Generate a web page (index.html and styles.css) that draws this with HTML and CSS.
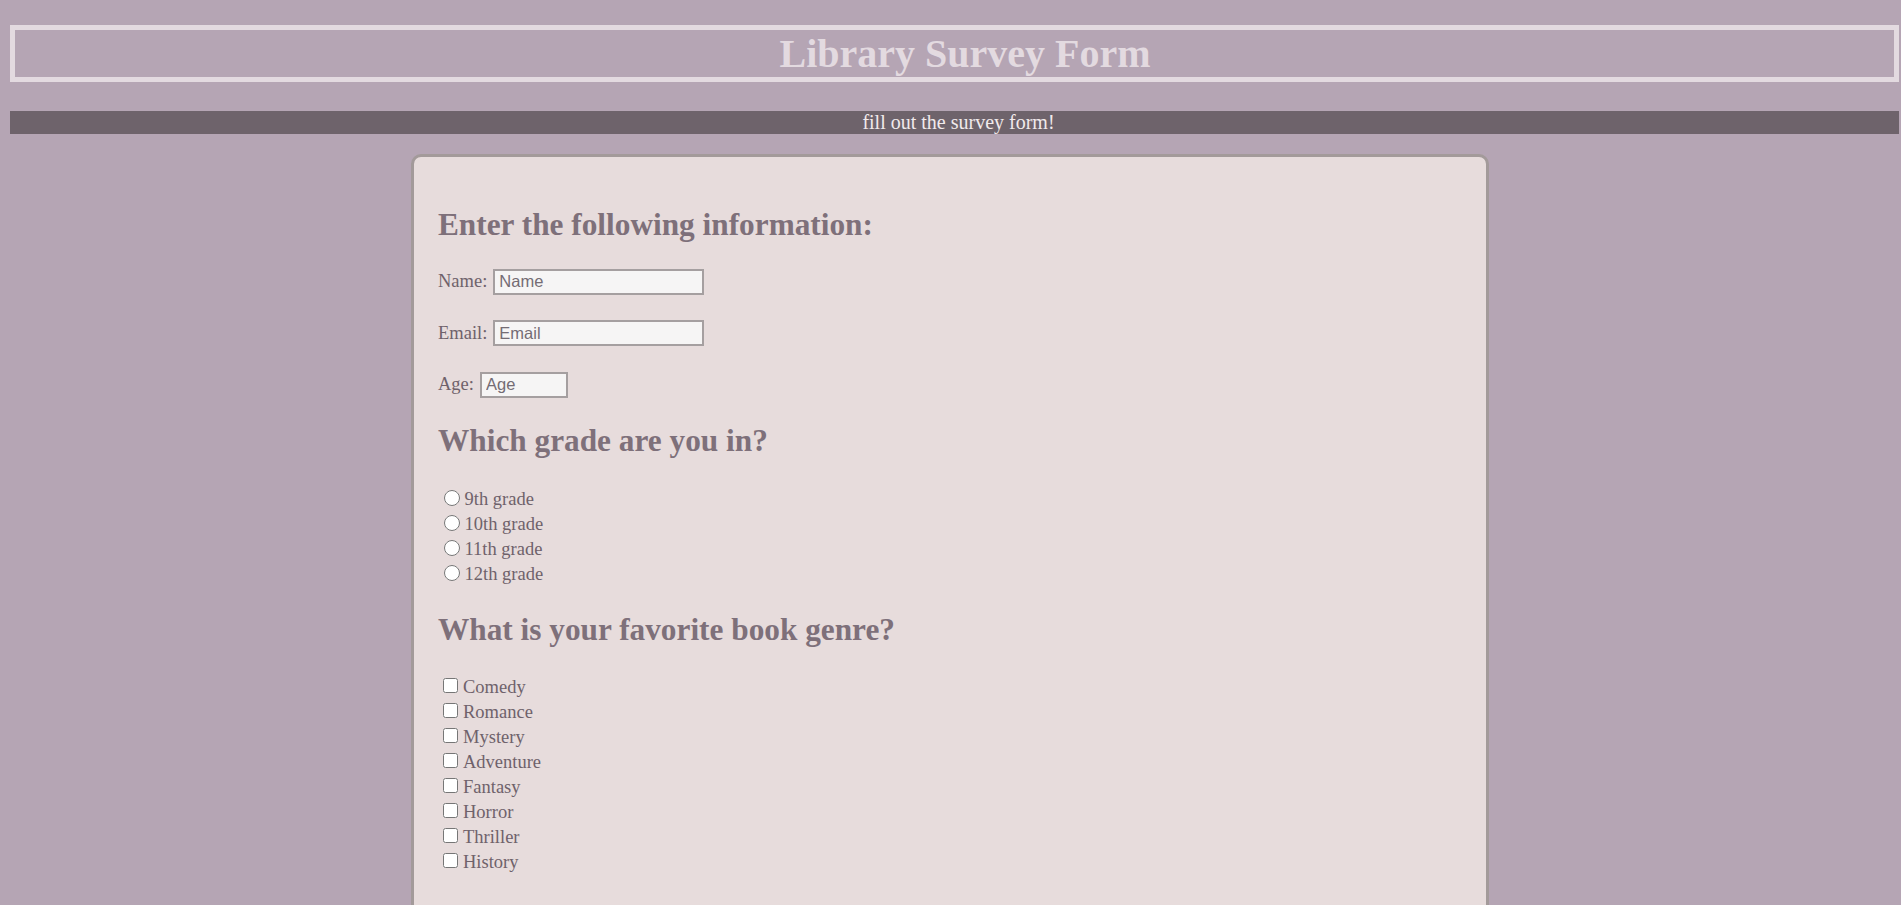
FILE: index.html
```html
<!DOCTYPE html>
<html lang="en">
<head>
<meta charset="utf-8">
<title>Library Survey Form</title>
<link rel="stylesheet" href="styles.css">
</head>
<body>
  <header class="title-box">
    <h1 class="title">Library Survey Form</h1>
  </header>
  <p class="description">fill out the survey form!</p>

  <form class="card">
    <h2 class="section-title first">Enter the following information:</h2>
    <div class="field">
      <label class="field-label" for="name">Name:</label>
      <input class="text-input wide" id="name" type="text" placeholder="Name">
    </div>
    <div class="field">
      <label class="field-label" for="email">Email:</label>
      <input class="text-input wide" id="email" type="email" placeholder="Email">
    </div>
    <div class="field">
      <label class="field-label" for="age">Age:</label>
      <input class="text-input narrow" id="age" type="number" placeholder="Age">
    </div>

    <h2 class="section-title">Which grade are you in?</h2>
    <div class="option-list">
      <label class="option"><input class="radio" type="radio" name="grade">9th grade</label>
      <label class="option"><input class="radio" type="radio" name="grade">10th grade</label>
      <label class="option"><input class="radio" type="radio" name="grade">11th grade</label>
      <label class="option"><input class="radio" type="radio" name="grade">12th grade</label>
    </div>

    <h2 class="section-title genre">What is your favorite book genre?</h2>
    <div class="option-list">
      <label class="option"><input class="check" type="checkbox">Comedy</label>
      <label class="option"><input class="check" type="checkbox">Romance</label>
      <label class="option"><input class="check" type="checkbox">Mystery</label>
      <label class="option"><input class="check" type="checkbox">Adventure</label>
      <label class="option"><input class="check" type="checkbox">Fantasy</label>
      <label class="option"><input class="check" type="checkbox">Horror</label>
      <label class="option"><input class="check" type="checkbox">Thriller</label>
      <label class="option"><input class="check" type="checkbox">History</label>
    </div>
  </form>
</body>
</html>
```
FILE: styles.css
```css
body {
  margin: 0 2px 0 10px;
  padding: 25px 0 0;
  background: #b5a5b4;
  font-family: "Liberation Serif", "Times New Roman", serif;
  color: #6f626b;
}

.title-box {
  padding: 0 0 0 21px;
  border: 5px solid #e3dae0;
}

.title {
  margin: 0;
  text-align: center;
  font-size: 40px;
  font-weight: bold;
  line-height: 47px;
  color: #e3dae0;
}

.description {
  margin: 29px 0 0;
  padding: 0 0 0 8px;
  background: #6e636b;
  color: #f1eaeb;
  font-size: 20px;
  line-height: 23px;
  text-align: center;
}

.card {
  box-sizing: border-box;
  width: 1078px;
  margin: 20px 0 0 401px;
  padding: 23px 24px 120px;
  background: #e7dcdc;
  border: 3px solid #a39a9a;
  border-radius: 10px;
}

.section-title {
  margin: 25px 0 28px;
  font-size: 31.3px;
  font-weight: bold;
  line-height: 35.6px;
  color: #7e707a;
}

.section-title.first {
  margin-top: 27px;
  margin-bottom: 26px;
}

.section-title.genre {
  margin-bottom: 27px;
}

.field {
  display: flex;
  align-items: baseline;
  gap: 6px;
  margin-bottom: 25.5px;
  font-size: 18.5px;
}

.field:last-of-type {
  margin-bottom: 0;
}

.field-label {
  color: #6f626b;
}

.text-input {
  box-sizing: border-box;
  height: 26px;
  margin: 0;
  padding: 0 4px;
  border: 2px solid #a59fa0;
  background: #f6f5f5;
  font-family: "Liberation Sans", Arial, sans-serif;
  font-size: 16.5px;
  color: #6f626b;
  outline: none;
}

.text-input::placeholder {
  color: #746c74;
  opacity: 1;
}

.text-input.wide {
  width: 211px;
}

.text-input.narrow {
  width: 88px;
  -moz-appearance: textfield;
}

.text-input.narrow::-webkit-outer-spin-button,
.text-input.narrow::-webkit-inner-spin-button {
  -webkit-appearance: none;
  margin: 0;
}

.option-list {
  display: flex;
  flex-direction: column;
}

.option {
  display: block;
  font-size: 18.5px;
  line-height: 25.1px;
  color: #6f626b;
}

.radio {
  width: 16px;
  height: 16px;
  margin: 0 5px 0 5.5px;
  vertical-align: -1px;
}

.check {
  width: 15px;
  height: 15px;
  margin: 0 5px 0 5px;
  vertical-align: baseline;
}
```
